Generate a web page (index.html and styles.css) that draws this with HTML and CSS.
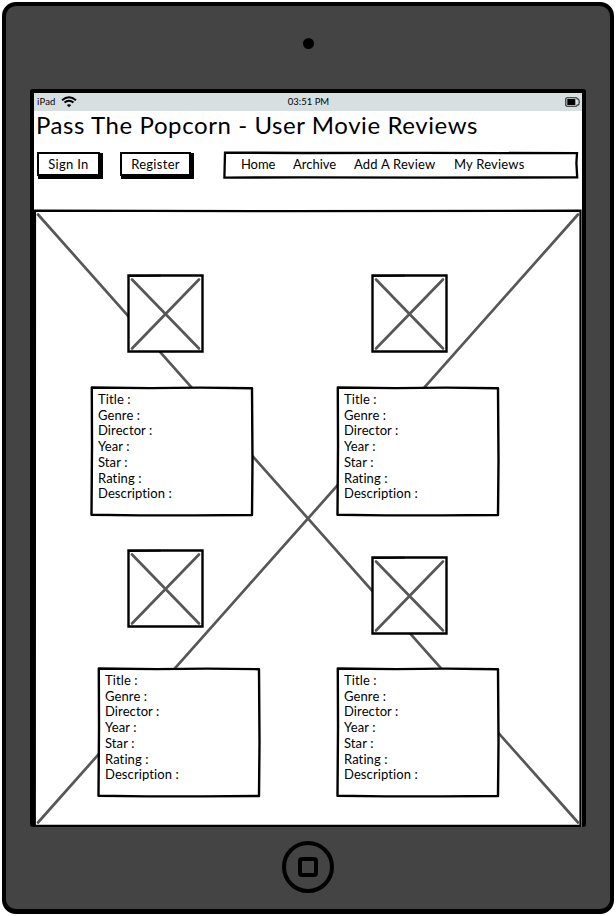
FILE: index.html
```html
<!DOCTYPE html>
<html lang="en">
<head>
<meta charset="utf-8">
<title>Pass The Popcorn - User Movie Reviews</title>
<link rel="stylesheet" href="styles.css">
</head>
<body>
<svg class="defs" aria-hidden="true">
  <symbol id="poster" viewBox="0 0 77 79">
    <path d="M1.5 1.5H75.5V77.5H1.5Z" fill="#fff" stroke="#000" stroke-width="2.4"/>
    <path d="M1 1.2L34 .8V2.5L1 3Z"/>
    <path d="M5 5.5L72 74.5M72 5.5L5 74.5" stroke="#575757" stroke-width="2.7" stroke-linecap="round"/>
  </symbol>
  <symbol id="panel" viewBox="0 0 164 131">
    <path d="M1.8 1.5L60 2.1L110 1.6L162 2.2L162.5 75L162 129L105 129.4L50 129.4L1.5 128.8L2 60Z" fill="#fff" stroke="#000" stroke-width="2.4" stroke-linejoin="round"/>
  </symbol>
</svg>
<div class="device">
  <div class="camera"></div>
  <div class="screen">
    <header class="status">
      <span class="carrier">iPad</span>
      <svg class="wifi" viewBox="0 0 16 12"><path d="M1 4.3Q8-1.8 15 4.3M3.5 6.5Q8 2.8 12.5 6.5" fill="none" stroke="#000" stroke-width="1.9"/><path d="M5.8 8.9Q8 7.6 10.2 8.9L8 11.2Z"/></svg>
      <span class="clock">03:51 PM</span>
      <svg class="battery" viewBox="0 0 15 10"><path d="M2 .8H11.2Q12.2.8 12.2 2H13.2Q14.2 2.2 14.2 5T13.2 8H12.2Q12.2 9.2 11.2 9.2H2Q.8 9.2.8 8V2Q.8.8 2 .8Z" fill="none" stroke="#222" stroke-width="1.1"/><path d="M2.3 2H10.3V8H2.3Z"/></svg>
    </header>
    <h1>Pass The Popcorn - User Movie Reviews</h1>
    <div class="toolbar">
      <button class="sign-in">Sign In</button>
      <button class="register">Register</button>
      <nav>
        <svg class="outline" viewBox="0 0 356 28"><path d="M2 1.6L80 2L200 1.8L354 2.2L353.4 12L354.2 26.4L200 26.6L80 26.3L1.4 26.6Z" fill="#fff" stroke="#000" stroke-width="2.3"/></svg>
        <a class="home">Home</a><a class="archive">Archive</a><a class="add">Add A Review</a><a class="mine">My Reviews</a>
      </nav>
    </div>
    <main>
      <svg class="backdrop" viewBox="0 0 550 618"><path d="M2 1.6L250 2.2L547.5 1.7V616.8H1.8Z" fill="#fff" stroke="#000" stroke-width="2.2"/><path d="M5 5.5L545 613.5M545 5.5L5 613.5" stroke="#575757" stroke-width="2.7" stroke-linecap="round"/></svg>
      <article class="review a">
        <svg class="poster"><use href="#poster"/></svg>
        <div class="details"><svg class="outline"><use href="#panel"/></svg><p>Title :</p><p>Genre :</p><p>Director :</p><p>Year :</p><p>Star :</p><p>Rating :</p><p>Description :</p></div>
      </article>
      <article class="review b">
        <svg class="poster"><use href="#poster"/></svg>
        <div class="details"><svg class="outline"><use href="#panel"/></svg><p>Title :</p><p>Genre :</p><p>Director :</p><p>Year :</p><p>Star :</p><p>Rating :</p><p>Description :</p></div>
      </article>
      <article class="review c">
        <svg class="poster"><use href="#poster"/></svg>
        <div class="details"><svg class="outline"><use href="#panel"/></svg><p>Title :</p><p>Genre :</p><p>Director :</p><p>Year :</p><p>Star :</p><p>Rating :</p><p>Description :</p></div>
      </article>
      <article class="review d">
        <svg class="poster"><use href="#poster"/></svg>
        <div class="details"><svg class="outline"><use href="#panel"/></svg><p>Title :</p><p>Genre :</p><p>Director :</p><p>Year :</p><p>Star :</p><p>Rating :</p><p>Description :</p></div>
      </article>
    </main>
  </div>
  <svg class="home-button" viewBox="0 0 52 52"><circle cx="26" cy="26" r="24" fill="none" stroke="#000" stroke-width="4"/><rect x="18" y="18" width="16" height="16" rx="2" fill="none" stroke="#000" stroke-width="4"/></svg>
</div>
</body>
</html>
```
FILE: styles.css
```css
* { box-sizing: border-box; }
body { margin: 0; padding: 2px; background: #fff; color: #000; font: 13px/16px Lato, sans-serif; }
.defs { display: none; }
.device { width: 612px; height: 912px; background: #444; border: 4px solid #000; border-bottom-width: 5px; border-radius: 14px; display: flex; flex-direction: column; align-items: center; }
.camera { width: 11px; height: 11px; border-radius: 50%; background: #000; margin-top: 32px; flex: none; }
.screen { width: 556px; height: 738px; margin-top: 40px; border: 4px solid #000; border-bottom: 0; border-radius: 3px; background: #fff; flex: none; }
.status { height: 18px; background: #d7dfe1; display: grid; grid-template-columns: 24px 1fr auto 1fr 24px; align-items: center; padding: 0 2px 1px 3px; font-size: 9.5px; line-height: 14px; }
.wifi { width: 16px; height: 12px; }
.carrier { letter-spacing: .2px; }
.clock { letter-spacing: 0; }
.battery { grid-column: 5; width: 15px; height: 10px; justify-self: end; }
h1 { margin: 0; padding-left: 2px; font-size: 24px; font-weight: 400; line-height: 28px; white-space: nowrap; letter-spacing: .58px; }
.toolbar { display: flex; height: 28px; margin-top: 12px; padding-left: 3px; }
button { font: inherit; color: #000; height: 24px; margin: 1px 0 0; padding: 0; border: 2px solid #000; background: #fff; box-shadow: 2px 2px 0 1px #000; clip-path: inset(0 -3px -3px 0); letter-spacing: .3px; }
.sign-in { width: 63px; }
.register { width: 71px; margin-left: 20px; }
nav { position: relative; width: 356px; margin-left: 32px; display: flex; padding-top: 5px; white-space: nowrap; }
nav a { position: relative; letter-spacing: .2px; }
.home { margin-left: 18px; width: 52px; letter-spacing: -.1px; }
.archive { width: 61px; letter-spacing: 0; }
.add { width: 100px; }
.outline { position: absolute; left: 0; top: 0; width: 100%; height: 100%; }
main { position: relative; width: 550px; height: 618px; margin: 30px 0 0 -1px; display: grid; grid-template-columns: 247px 1fr; grid-template-rows: 307px 1fr; }
.backdrop { position: absolute; left: 0; top: 0; width: 550px; height: 618px; }
.review { position: relative; display: flex; flex-direction: column; width: 164px; }
.poster { width: 77px; height: 79px; flex: none; }
.a, .b { padding-top: 65px; }
.a { margin-left: 57px; }
.b { margin-left: 56px; }
.c { margin-left: 64px; padding-top: 33px; }
.d { margin-left: 56px; padding-top: 40px; }
.a .poster { margin-left: 37px; }
.b .poster { margin-left: 35px; }
.c .poster { margin-left: 30px; }
.d .poster { margin-left: 35px; }
.details { position: relative; width: 164px; height: 131px; flex: none; margin-top: 33px; padding: 6px 0 0 8px; }
.c .details { margin-top: 39px; }
.d .details { margin-top: 32px; }
.details p { position: relative; margin: 0; line-height: 15.7px; letter-spacing: .1px; }
.home-button { width: 52px; height: 52px; margin-top: 14px; flex: none; }
```
